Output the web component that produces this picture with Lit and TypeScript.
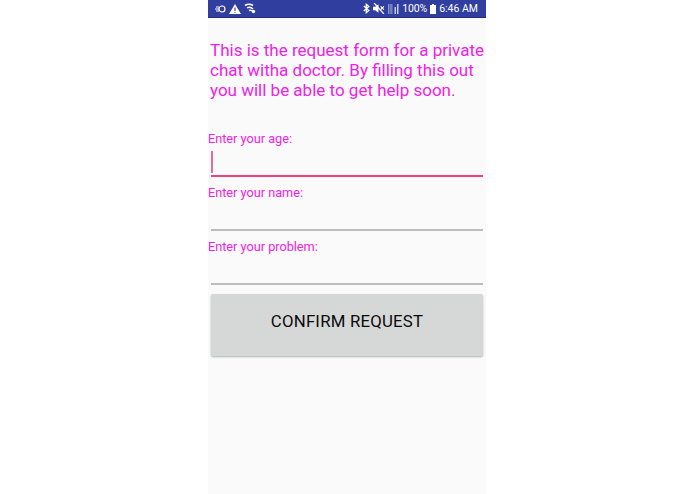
import { LitElement, html, css } from "lit";
import { customElement } from "lit/decorators.js";

@customElement("app-root")
export class AppRoot extends LitElement {
  static styles = css`
    :host { display: block; width: 695px; height: 494px; background: #fff; font-family: Roboto, sans-serif; overflow: hidden; }
    .phone { width: 278px; height: 494px; margin-left: 208px; background: #fafafa; display: flex; flex-direction: column; }
    .status { height: 18px; box-sizing: border-box; background: #303f9f; border-bottom: 1px solid #1f2a80; color: #fff; display: flex; align-items: center; justify-content: space-between; padding: 0 8px 0 7px; font-size: 10.5px; }
    .status svg { display: block; }
    .left { display: flex; align-items: center; gap: 3px; }
    .right { display: flex; align-items: center; gap: 3px; }
    .pct { letter-spacing: -.15px; }
    .intro { margin: 22px 0 0 2px; font-size: 17px; line-height: 20px; color: #ee22e4; white-space: nowrap; }
    .form { margin-top: 30px; display: flex; flex-direction: column; }
    .label { font-size: 12.7px; line-height: 17px; color: #ee22e4; height: 15px; }
    .field { height: 32px; margin: 0 3px 7px 3px; box-sizing: border-box; border-bottom: 2px solid #bdbdbd; display: flex; align-items: flex-end; }
    .field.active { border-bottom-color: #f0407f; }
    .caret { width: 2px; height: 22px; background: #e0709a; margin: 0 0 2px 0; }
    button { margin: 2px 3px 0 3px; height: 62px; width: 272px; border: 0; border-radius: 2px; background: #d6d7d7; box-shadow: 0 1px 2px rgba(0,0,0,.3); font-family: Roboto, sans-serif; font-size: 16.8px; font-weight: 400; color: #0a0a0a; letter-spacing: .2px; padding: 0 0 8px; }
  `;
  render() {
    return html`<div class="phone">
      <div class="status">
        <div class="left">
          <svg width="11" height="10" viewBox="0 0 11 10" fill="none" stroke="#fff"><circle cx="7" cy="5" r="3" stroke-width="1.2"/><path d="M1 3h3M0 5h4M1 7h3" stroke-width="1"/></svg>
          <svg width="12" height="10" viewBox="0 0 12 10"><path d="M6 0L12 10H0Z" fill="#fff"/><path d="M6 3.500v3.500M6 7.800v1" stroke="#303f9f" stroke-width="1.100"/></svg>
          <svg width="12" height="11" viewBox="0 0 12 11" fill="none" stroke="#fff" stroke-width="1.500"><path d="M1 2.500q4-2.500 8 0M3 5q3-2 6 1M5 7.500q2-1 4 1"/><circle cx="9.500" cy="8.500" r="1.700" fill="#fff" stroke="none"/></svg>
        </div>
        <div class="right">
          <svg width="7" height="11" viewBox="0 0 7 10" fill="none" stroke="#fff" stroke-width="1.300"><path d="M.8 2.500L5.800 7 3.300 9.200V.8L5.800 3 .8 7.500"/></svg>
          <svg width="12" height="11" viewBox="0 0 11 10"><path d="M0 3.500h2L5 1v8L2 6.500H0Z" fill="#fff"/><path d="M1 0l9 10" stroke="#fff" stroke-width="1.100"/><path d="M7 3l3 3M10 3L7 6" stroke="#fff" stroke-width="1.100"/></svg>
          <svg width="11" height="10" viewBox="0 0 11 10"><path d="M10.500 0v10H9V0ZM8 3v7H6.500V3Z" fill="#c5c9e6"/><path d="M0 1h5M0 3h5M0 5h5M0 7h5M0 9h5" stroke="#e6e8f5" stroke-width="1" stroke-dasharray="1.500 .8"/></svg>
          <span class="pct">100%</span>
          <svg width="6" height="10" viewBox="0 0 6 10"><path d="M2 0h2v1h2v9H0V1h2Z" fill="#fff"/></svg>
          <span>6:46 AM</span>
        </div>
      </div>
      <div class="intro">This is the request form for a private<br>chat witha doctor. By filling this out<br>you will be able to get help soon.</div>
      <div class="form">
        <div class="label">Enter your age:</div>
        <div class="field active"><div class="caret"></div></div>
        <div class="label">Enter your name:</div>
        <div class="field"></div>
        <div class="label">Enter your problem:</div>
        <div class="field"></div>
        <button>CONFIRM REQUEST</button>
      </div>
    </div>`;
  }
}
